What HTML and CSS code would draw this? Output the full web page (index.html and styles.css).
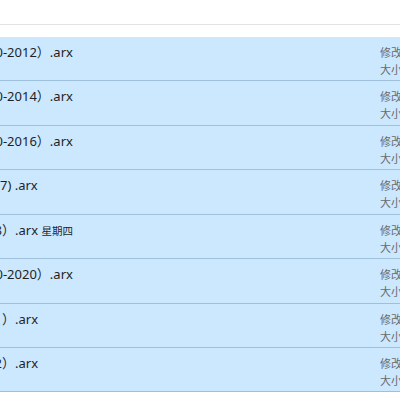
FILE: index.html
```html
<!DOCTYPE html>
<html>
<head>
<meta charset="utf-8">
<link rel="stylesheet" href="styles.css">
</head>
<body>
<div class="page">
  <div class="top"></div>
  <div class="list">
    <div class="row">
      <div class="name"><span class="nm shift-long">0-2012）.arx</span></div>
      <div class="meta"><div>修改日期: 2021/3/4 10:12</div><div>大小: 1.25 MB</div></div>
    </div>
    <div class="row">
      <div class="name"><span class="nm shift-long">0-2014）.arx</span></div>
      <div class="meta"><div>修改日期: 2021/3/4 10:12</div><div>大小: 1.31 MB</div></div>
    </div>
    <div class="row">
      <div class="name"><span class="nm shift-long">0-2016）.arx</span></div>
      <div class="meta"><div>修改日期: 2021/3/4 10:12</div><div>大小: 1.40 MB</div></div>
    </div>
    <div class="row">
      <div class="name"><span class="nm">7) .arx</span></div>
      <div class="meta"><div>修改日期: 2021/3/4 10:12</div><div>大小: 1.42 MB</div></div>
    </div>
    <div class="row">
      <div class="name"><span class="nm shift-short">8）.arx <span class="day">星期四</span></span></div>
      <div class="meta"><div>修改日期: 2021/3/4 10:12</div><div>大小: 1.45 MB</div></div>
    </div>
    <div class="row">
      <div class="name"><span class="nm shift-long">0-2020）.arx</span></div>
      <div class="meta"><div>修改日期: 2021/3/4 10:12</div><div>大小: 1.52 MB</div></div>
    </div>
    <div class="row">
      <div class="name"><span class="nm shift-paren">）.arx</span></div>
      <div class="meta"><div>修改日期: 2021/3/4 10:12</div><div>大小: 1.55 MB</div></div>
    </div>
    <div class="row">
      <div class="name"><span class="nm shift-short">2）.arx</span></div>
      <div class="meta"><div>修改日期: 2021/3/4 10:12</div><div>大小: 1.60 MB</div></div>
    </div>
  </div>
</div>
</body>
</html>
```

FILE: styles.css
```css
html, body {
  margin: 0;
  padding: 0;
  background: #ffffff;
}
.page {
  width: 400px;
  height: 400px;
  overflow: hidden;
  font-family: "Noto Sans", "Noto Sans CJK SC", sans-serif;
}
.top {
  height: 24px;
  border-bottom: 1px solid #e3e3e3;
  margin-bottom: 12px;
}
.list {
  display: flex;
  flex-direction: column;
}
.row {
  display: grid;
  grid-template-columns: 380px 220px;
  height: 44.43px;
  box-sizing: border-box;
  background: #cce8ff;
  border-bottom: 1px solid #9fc0dc;
  white-space: nowrap;
}
.name {
  overflow: hidden;
  padding-top: 5px;
  font-size: 13px;
  line-height: 20px;
  color: #1f1f1f;
}
.nm {
  display: inline-block;
}
.shift-long {
  margin-left: -4.5px;
}
.shift-short {
  margin-left: -5.4px;
}
.shift-paren {
  margin-left: 2px;
}
.day {
  font-size: 10.5px;
  font-family: "Noto Sans CJK SC", sans-serif;
}
.meta {
  padding-top: 7px;
  font-size: 11px;
  line-height: 17px;
  color: #6a6a6a;
  font-family: "Noto Sans CJK SC", sans-serif;
}
```
